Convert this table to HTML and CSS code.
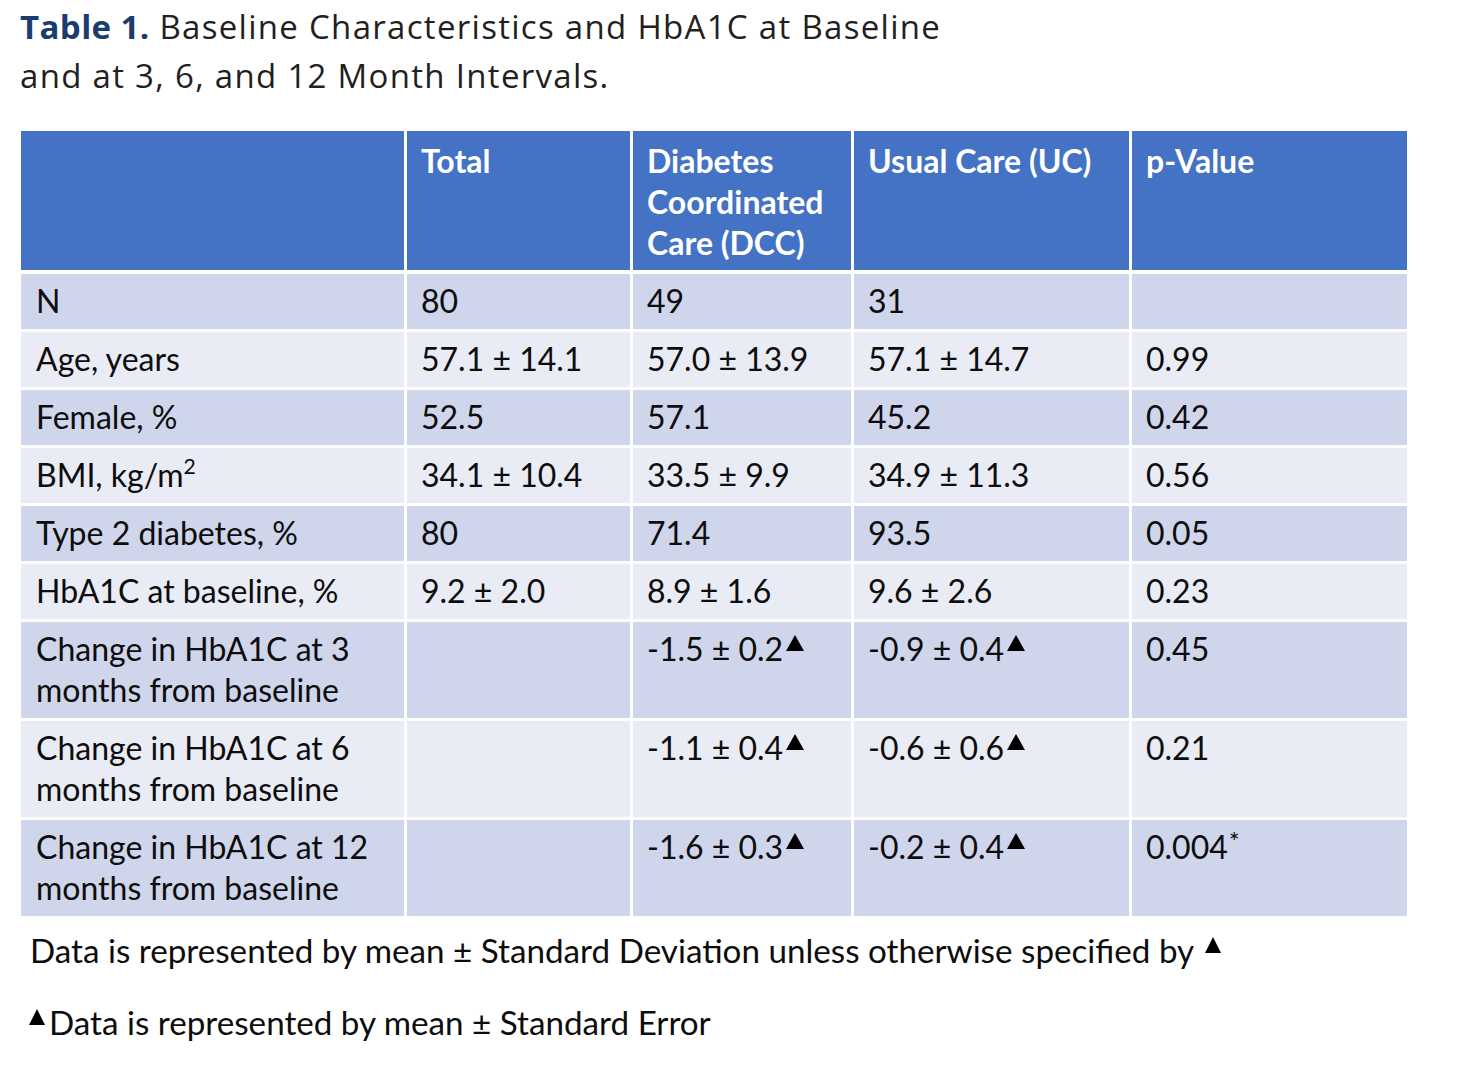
FILE: index.html
```html
<!DOCTYPE html>
<html lang="en">
<head>
<meta charset="utf-8">
<title>Table 1</title>
<link rel="stylesheet" href="styles.css">
</head>
<body>
<h1 class="title"><span class="label">Table 1.</span> Baseline Characteristics and HbA1C at Baseline<br>and at 3, 6, and 12 Month Intervals.</h1>

<div class="table">
  <div class="row head">
    <div class="cell first"></div>
    <div class="cell">Total</div>
    <div class="cell">Diabetes<br>Coordinated<br>Care (DCC)</div>
    <div class="cell">Usual Care (UC)</div>
    <div class="cell">p-Value</div>
  </div>
  <div class="row dark">
    <div class="cell first">N</div>
    <div class="cell">80</div>
    <div class="cell">49</div>
    <div class="cell">31</div>
    <div class="cell"></div>
  </div>
  <div class="row light">
    <div class="cell first">Age, years</div>
    <div class="cell">57.1 ± 14.1</div>
    <div class="cell">57.0 ± 13.9</div>
    <div class="cell">57.1 ± 14.7</div>
    <div class="cell">0.99</div>
  </div>
  <div class="row dark">
    <div class="cell first">Female, %</div>
    <div class="cell">52.5</div>
    <div class="cell">57.1</div>
    <div class="cell">45.2</div>
    <div class="cell">0.42</div>
  </div>
  <div class="row light">
    <div class="cell first">BMI, kg/m<sup class="sq">2</sup></div>
    <div class="cell">34.1 ± 10.4</div>
    <div class="cell">33.5 ± 9.9</div>
    <div class="cell">34.9 ± 11.3</div>
    <div class="cell">0.56</div>
  </div>
  <div class="row dark">
    <div class="cell first">Type 2 diabetes, %</div>
    <div class="cell">80</div>
    <div class="cell">71.4</div>
    <div class="cell">93.5</div>
    <div class="cell">0.05</div>
  </div>
  <div class="row light">
    <div class="cell first">HbA1C at baseline, %</div>
    <div class="cell">9.2 ± 2.0</div>
    <div class="cell">8.9 ± 1.6</div>
    <div class="cell">9.6 ± 2.6</div>
    <div class="cell">0.23</div>
  </div>
  <div class="row dark">
    <div class="cell first">Change in HbA1C at 3<br>months from baseline</div>
    <div class="cell"></div>
    <div class="cell">-1.5 ± 0.2<span class="tri"></span></div>
    <div class="cell">-0.9 ± 0.4<span class="tri"></span></div>
    <div class="cell">0.45</div>
  </div>
  <div class="row light">
    <div class="cell first">Change in HbA1C at 6<br>months from baseline</div>
    <div class="cell"></div>
    <div class="cell">-1.1 ± 0.4<span class="tri"></span></div>
    <div class="cell">-0.6 ± 0.6<span class="tri"></span></div>
    <div class="cell">0.21</div>
  </div>
  <div class="row dark">
    <div class="cell first">Change in HbA1C at 12<br>months from baseline</div>
    <div class="cell"></div>
    <div class="cell">-1.6 ± 0.3<span class="tri"></span></div>
    <div class="cell">-0.2 ± 0.4<span class="tri"></span></div>
    <div class="cell">0.004<sup class="star">*</sup></div>
  </div>
</div>

<p class="note note1">Data is represented by mean ± Standard Deviation unless otherwise specified by <span class="tri"></span></p>
<p class="note note2"><span class="tri lead"></span>Data is represented by mean ± Standard Error</p>
</body>
</html>
```

FILE: styles.css
```css
html, body {
  margin: 0;
  padding: 0;
  background: #ffffff;
}

body {
  font-family: Lato, "Open Sans", "Liberation Sans", sans-serif;
  color: #0d0d0d;
}

.title {
  margin: 2px 0 0 20px;
  font-family: "Open Sans", Lato, "Liberation Sans", sans-serif;
  font-size: 33px;
  line-height: 49px;
  letter-spacing: 1.3px;
  font-weight: 400;
  color: #231f20;
}

.title .label {
  font-weight: 700;
  letter-spacing: 0.4px;
  color: #1b3d6d;
}

.table {
  margin: 31px 0 0 21px;
  width: 1386px;
  display: flex;
  flex-direction: column;
  gap: 3px;
}

.row {
  display: grid;
  grid-template-columns: 383px 223px 218px 275px 275px;
  column-gap: 3px;
}

.cell {
  font-size: 32px;
  line-height: 41px;
  padding: 6px 10px 8px 14px;
  white-space: nowrap;
}

.cell.first {
  padding-left: 15px;
}

.head {
  margin-bottom: 1px;
}

.head .cell {
  background: #4472c4;
  color: #ffffff;
  font-weight: 700;
  padding-top: 9px;
  padding-bottom: 7px;
}

.dark .cell {
  background: #cfd5ea;
}

.light .cell {
  background: #e9ebf5;
}

.sq {
  font-size: 0.66em;
  line-height: 0;
  vertical-align: 0.6em;
}

.star {
  font-size: 0.8em;
  line-height: 0;
  vertical-align: 0.3em;
  margin-left: 1px;
}

.tri {
  display: inline-block;
  width: 0;
  height: 0;
  border-left: 9px solid transparent;
  border-right: 9px solid transparent;
  border-bottom: 16px solid #000000;
  margin-left: 3px;
  margin-bottom: 10px;
  vertical-align: baseline;
}

.note {
  margin: 0;
  padding-left: 30px;
  font-size: 33.2px;
  line-height: 41px;
  white-space: nowrap;
}

.note1 {
  margin-top: 14px;
}

.note2 {
  margin-top: 31px;
  padding-left: 29px;
}

.note .tri {
  border-left-width: 8px;
  border-right-width: 8px;
  border-bottom-width: 16px;
  margin-bottom: 10px;
}

.note .tri.lead {
  margin-left: 0;
  margin-right: 4px;
}
```
